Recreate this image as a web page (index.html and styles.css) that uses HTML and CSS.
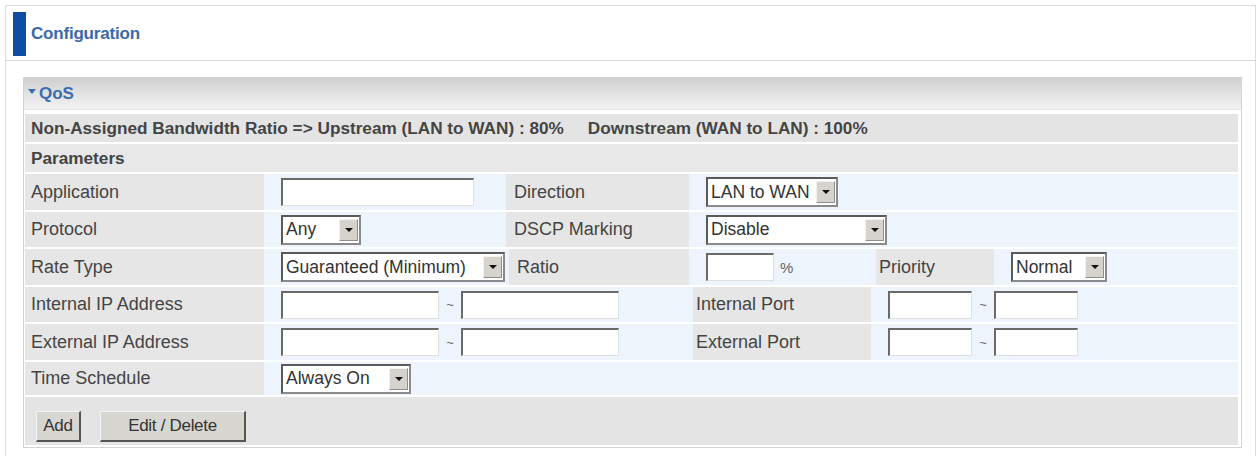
FILE: index.html
```html
<!DOCTYPE html>
<html>
<head>
<meta charset="utf-8">
<link rel="stylesheet" href="styles.css">
</head>
<body>
<div class="page">
  <div class="head">
    <span class="headbar"></span>
    <span class="headtitle">Configuration</span>
  </div>
  <div class="content">
    <div class="panel">
      <div class="ptitle">
        <svg class="tri" width="8" height="5" viewBox="0 0 8 5"><polygon points="0,0 8,0 4,5" fill="#3a6cb0"/></svg>
        <span>QoS</span>
      </div>
      <div class="rows">
        <div class="row info"><span>Non-Assigned Bandwidth Ratio =&gt; Upstream (LAN to WAN) : 80%</span><span class="down">Downstream (WAN to LAN) : 100%</span></div>
        <div class="row params">Parameters</div>

        <div class="row g-a h36">
          <div class="lab">Application</div>
          <div class="val"><span class="inp w-app"></span></div>
          <div class="lab">Direction</div>
          <div class="val"><span class="sel w-dir"><span class="txt">LAN to WAN</span><span class="arr"></span></span></div>
        </div>

        <div class="row g-a h35">
          <div class="lab">Protocol</div>
          <div class="val"><span class="sel w-proto"><span class="txt">Any</span><span class="arr"></span></span></div>
          <div class="lab">DSCP Marking</div>
          <div class="val"><span class="sel w-dscp"><span class="txt">Disable</span><span class="arr"></span></span></div>
        </div>

        <div class="row g-r h36">
          <div class="lab">Rate Type</div>
          <div class="val"><span class="sel w-rate"><span class="txt">Guaranteed (Minimum)</span><span class="arr"></span></span></div>
          <div class="lab">Ratio</div>
          <div class="val"><span class="inp w-ratio"></span><span class="pct">%</span></div>
          <div class="lab">Priority</div>
          <div class="val"><span class="sel w-prio"><span class="txt">Normal</span><span class="arr"></span></span></div>
        </div>

        <div class="row g-i h35">
          <div class="lab">Internal IP Address</div>
          <div class="val"><span class="inp w-ip"></span><span class="tilde">~</span><span class="inp w-ip"></span></div>
          <div class="lab">Internal Port</div>
          <div class="val"><span class="inp w-port"></span><span class="tilde">~</span><span class="inp w-port"></span></div>
        </div>

        <div class="row g-i h36">
          <div class="lab">External IP Address</div>
          <div class="val"><span class="inp w-ip"></span><span class="tilde">~</span><span class="inp w-ip"></span></div>
          <div class="lab">External Port</div>
          <div class="val"><span class="inp w-port"></span><span class="tilde">~</span><span class="inp w-port"></span></div>
        </div>

        <div class="row g-t">
          <div class="lab">Time Schedule</div>
          <div class="val"><span class="sel w-time"><span class="txt">Always On</span><span class="arr"></span></span></div>
        </div>

        <div class="row btns">
          <span class="btn b-add">Add</span>
          <span class="btn b-edit">Edit / Delete</span>
        </div>
      </div>
    </div>
  </div>
</div>
</body>
</html>
```

FILE: styles.css
```css
html, body {
  margin: 0;
  padding: 0;
  background: #ffffff;
}
body {
  font-family: "Liberation Sans", Arial, sans-serif;
  color: #444444;
}
.page {
  margin: 5px 3px 0 5px;
  border: 1px solid #dcdcdc;
  border-bottom: none;
  height: 451px;
  box-sizing: border-box;
}
.head {
  height: 54px;
  border-bottom: 1px solid #d8d8d8;
  display: flex;
  align-items: center;
  padding-left: 7px;
}
.headbar {
  width: 13px;
  height: 44px;
  background: #0d4ea0;
  margin-right: 5px;
  margin-top: 2px;
}
.headtitle {
  font-size: 17px;
  font-weight: bold;
  color: #3a6aa8;
  letter-spacing: -0.2px;
  margin-top: 2px;
}
.content {
  padding: 16px 13px 0 17px;
}
.panel {
  border: 1px solid #d4d4d4;
  padding: 0 3px 2px 1px;
}
.ptitle {
  height: 31px;
  margin: 0 -3px 0 -1px;
  background: linear-gradient(#cfcfcf, #e4e4e4 55%, #f2f2f2);
  border-bottom: 1px solid #e4e4e4;
  display: flex;
  align-items: center;
  padding-left: 4px;
  color: #3a6cb0;
  font-weight: bold;
  font-size: 17px;
}
.ptitle .tri {
  margin-right: 3px;
  margin-top: -4px;
}
.rows {
  display: flex;
  flex-direction: column;
  gap: 2px;
  padding-top: 4px;
}
.row {
  display: grid;
  height: 36px;
  font-size: 18px;
}
.row.h35 { height: 35px; }
.row.h36 { height: 36px; }
.row.info, .row.params {
  height: 28px;
  display: flex;
  align-items: center;
  padding-left: 6px;
  background: #e4e4e4;
  font-weight: bold;
  font-size: 17.2px;
}
.row.params {
  background: #e8e8e8;
}
.info .down {
  margin-left: 24px;
}
.g-a { grid-template-columns: 239px 242px 183px 1fr; }
.g-r { grid-template-columns: 239px 245px 180px 187px 118px 1fr; }
.g-i { grid-template-columns: 239px 429px 178px 1fr; }
.g-t { grid-template-columns: 239px 1fr; height: 33px; }
.lab {
  background: #e6e6e6;
  display: flex;
  align-items: center;
  padding-left: 6px;
}
.g-a .lab:nth-child(3), .g-r .lab:nth-child(3) {
  padding-left: 8px;
}
.g-r .lab:nth-child(5) { padding-left: 3px; }
.g-i .lab:nth-child(3) { padding-left: 3px; }
.val {
  background: #eef4fb;
  display: flex;
  align-items: center;
  padding-left: 17px;
}
.inp {
  display: inline-block;
  height: 28px;
  box-sizing: border-box;
  background: #ffffff;
  border-top: 2px solid #6a6a6a;
  border-left: 2px solid #6a6a6a;
  border-right: 1px solid #e0e0e0;
  border-bottom: 1px solid #e0e0e0;
}
.w-app { width: 193px; }
.w-ratio { width: 68px; }
.w-ip { width: 158px; }
.w-port { width: 84px; }
.tilde {
  width: 22px;
  text-align: center;
  font-size: 13px;
  color: #666;
}
.pct {
  margin-left: 6px;
  font-size: 15px;
  color: #666;
}
.sel {
  display: inline-flex;
  align-items: center;
  justify-content: space-between;
  height: 30px;
  box-sizing: border-box;
  background: #ffffff;
  border: 2px solid #5a5a5a;
  border-right-color: #8a8a8a;
  border-bottom-color: #8a8a8a;
  padding: 1px 1px 1px 3px;
  font-size: 17.5px;
  color: #333;
}
.sel .txt { white-space: nowrap; }
.sel .arr {
  width: 19px;
  height: 22px;
  background: #d6d3cc;
  border-right: 1px solid #8e8e8e;
  border-bottom: 1px solid #8e8e8e;
  border-top: 1px solid #f2f2f2;
  border-left: 1px solid #f2f2f2;
  box-sizing: border-box;
  position: relative;
  flex: none;
  margin-left: 3px;
}
.sel .arr::after {
  content: "";
  position: absolute;
  left: 5px;
  top: 8px;
  border-left: 4px solid transparent;
  border-right: 4px solid transparent;
  border-top: 4px solid #111;
}
.w-dir { width: 132px; }
.w-proto { width: 80px; }
.w-dscp { width: 181px; }
.w-rate { width: 224px; }
.w-prio { width: 96px; }
.w-time { width: 130px; }
.row.btns {
  height: 48px;
  background: #e4e4e4;
  display: flex;
  align-items: center;
  padding-left: 11px;
  gap: 19px;
}
.btn {
  display: inline-flex;
  align-items: center;
  justify-content: center;
  height: 31px;
  box-sizing: border-box;
  background: #d8d6d0;
  border-top: 1px solid #f4f4f4;
  border-left: 1px solid #f4f4f4;
  border-right: 2px solid #555;
  border-bottom: 2px solid #555;
  font-size: 17px;
  color: #333;
  letter-spacing: -0.3px;
  margin-top: 10px;
}
.b-add { width: 45px; }
.b-edit { width: 146px; }
```
